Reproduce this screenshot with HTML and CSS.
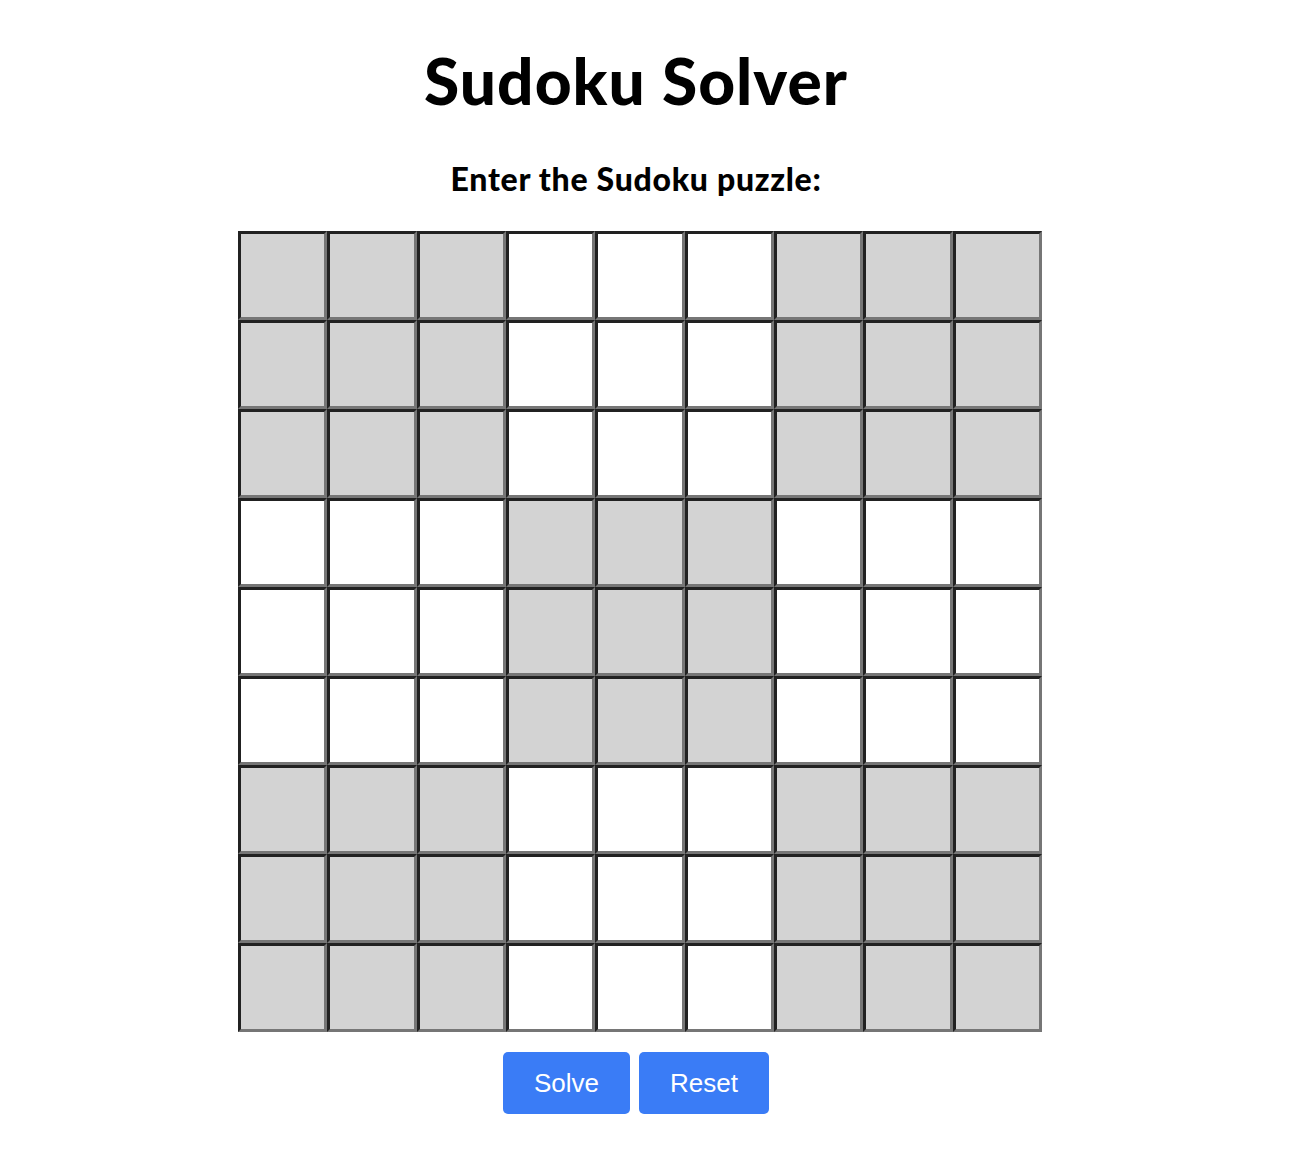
FILE: index.html
```html
<!DOCTYPE html>
<html lang="en">
<head>
  <meta charset="UTF-8">
  <meta name="viewport" content="width=device-width, initial-scale=1.0">
  <title>Sudoku Solver</title>
  <link rel="stylesheet" href="styles.css">
</head>
<body>

  <h1>Sudoku Solver</h1>
  <h2>Enter the Sudoku puzzle:</h2>

  <div id="board" class="board"></div>

  <div class="controls">
    <button onclick="solve()">Solve</button>
    <button onclick="resetBoard()">Reset</button>
  </div>

  <script>
    const board = document.getElementById('board');

    // 81 inputs, every other 3x3 box gets the grey background
    for (let r = 0; r < 9; r++) {
      for (let c = 0; c < 9; c++) {
        const input = document.createElement('input');
        input.type = 'text';
        input.maxLength = 1;
        input.className = 'cell';
        if ((Math.floor(r / 3) + Math.floor(c / 3)) % 2 === 0) input.classList.add('shaded');
        board.appendChild(input);
      }
    }

    function readGrid() {
      const cells = document.querySelectorAll('.cell');
      const grid = [];
      for (let r = 0; r < 9; r++) {
        grid.push([]);
        for (let c = 0; c < 9; c++) {
          const v = parseInt(cells[r * 9 + c].value);
          grid[r].push(v >= 1 && v <= 9 ? v : 0);
        }
      }
      return grid;
    }

    function canPlace(grid, r, c, n) {
      for (let i = 0; i < 9; i++) {
        if (grid[r][i] === n || grid[i][c] === n) return false;
      }
      const br = r - r % 3, bc = c - c % 3;
      for (let i = 0; i < 3; i++)
        for (let j = 0; j < 3; j++)
          if (grid[br + i][bc + j] === n) return false;
      return true;
    }

    function backtrack(grid) {
      for (let r = 0; r < 9; r++) {
        for (let c = 0; c < 9; c++) {
          if (grid[r][c] !== 0) continue;
          for (let n = 1; n <= 9; n++) {
            if (canPlace(grid, r, c, n)) {
              grid[r][c] = n;
              if (backtrack(grid)) return true;
              grid[r][c] = 0;
            }
          }
          return false;
        }
      }
      return true;
    }

    function solve() {
      const grid = readGrid();
      if (!backtrack(grid)) return alert("No solution found");
      const cells = document.querySelectorAll('.cell');
      cells.forEach((cell, i) => cell.value = grid[Math.floor(i / 9)][i % 9]);
    }

    function resetBoard() {
      document.querySelectorAll('.cell').forEach(cell => cell.value = '');
    }
  </script>

</body>
</html>
```

FILE: styles.css
```css
body {
  margin: 0;
  padding: 8px 20px 8px 0;
  font-family: 'Lato', 'Noto Sans', sans-serif;
  background-color: #fff;
  color: #000;
  text-align: center;
}

h1 {
  margin: 33px 0 0;
  font-size: 64px;
  font-weight: 900;
  line-height: 80px;
  letter-spacing: 1px;
}

h2 {
  margin: 38px 0 0;
  font-size: 32px;
  font-weight: 900;
  line-height: 40px;
  letter-spacing: 0.7px;
}

.board {
  display: grid;
  grid-template-columns: repeat(9, 1fr);
  grid-template-rows: repeat(9, 89px);
  width: 804px;
  margin: 32px auto 0;
  position: relative;
  left: 4px;
}

.cell {
  box-sizing: border-box;
  width: 100%;
  height: 100%;
  margin: 0;
  padding: 0;
  border: 3px inset #767676;
  background-color: #fff;
  font-family: 'Liberation Sans', Arial, sans-serif;
  font-size: 32px;
  text-align: center;
}

.cell.shaded {
  background-color: #d3d3d3;
}

.controls {
  display: flex;
  justify-content: center;
  gap: 9px;
  margin-top: 20px;
}

.controls button {
  background-color: #3a7cf6;
  color: white;
  border: none;
  border-radius: 5px;
  padding: 16px 31px;
  font-family: 'Liberation Sans', Arial, sans-serif;
  font-size: 26px;
  line-height: 30px;
  cursor: pointer;
}

.controls button:hover {
  background-color: #2563eb;
}
```
